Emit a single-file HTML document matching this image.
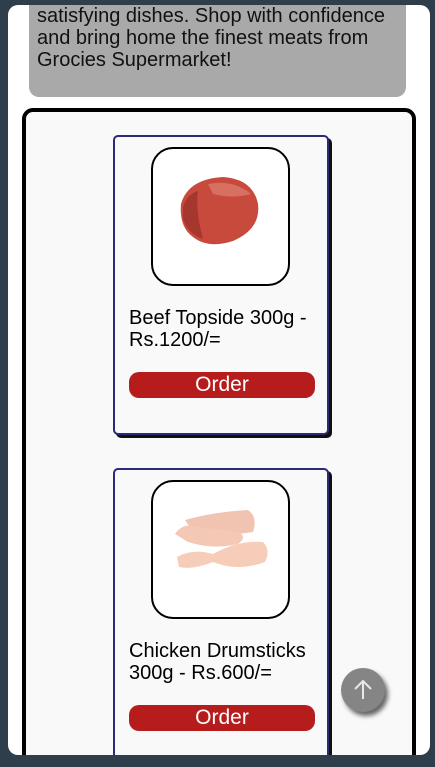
<!DOCTYPE html>
<html><head><meta charset="utf-8"><style>
*{box-sizing:border-box;margin:0;padding:0}
html,body{width:435px;height:767px;overflow:hidden;background:#2f3e4b;font-family:"Liberation Sans",Arial,sans-serif}
.panel{position:absolute;left:8px;top:5px;width:422px;height:750px;background:#fff;border-radius:10px;overflow:hidden}
.grey{position:absolute;left:21px;top:-40px;width:377px;height:132px;background:#aaa9a9;border-radius:10px;padding:0 8px}
.grey p{position:absolute;left:8px;top:40px;font-size:20px;line-height:22px;color:#111;width:370px}
.box{position:absolute;left:14px;top:103px;width:394px;height:660px;border:4px solid #000;border-radius:11px;background:#f9f9f9}
.card{position:absolute;left:87px;width:216px;height:300px;border:2px solid #2b2a7a;border-radius:5px;background:#f9f9f9;box-shadow:3px 3px 0 #111}
.img{position:absolute;left:36px;top:10px;width:139px;height:139px;border:2.5px solid #000;border-radius:22px;background:#fff;overflow:hidden}
.t{position:absolute;left:14px;top:170px;font-size:20px;line-height:22px;color:#000;width:195px}
.btn{position:absolute;left:14px;top:235px;width:186px;height:26px;background:#b71c1c;border-radius:10px;color:#fff;font-size:21px;text-align:center;line-height:25px}
.up{position:absolute;left:341px;top:668px;width:44px;height:44px;border-radius:50%;background:#858585;box-shadow:3px 4px 5px rgba(0,0,0,.6)}
</style></head><body>
<div class="panel">
<div class="grey"><p>satisfying dishes. Shop with confidence and bring home the finest meats from Grocies Supermarket!</p></div>
<div class="box">
<div class="card" style="top:23px">
<div class="img"><svg width="139" height="139" viewBox="0 0 139 139">
<path d="M28 55 Q35 30 70 28 Q100 30 105 55 Q108 80 80 92 Q55 100 40 88 Q26 78 28 55Z" fill="#c84a3c"/>
<path d="M30 58 Q34 45 45 42 Q42 60 50 90 Q35 85 30 70Z" fill="#a6372e"/>
<path d="M55 35 Q80 30 98 45 Q80 50 60 45Z" fill="#dd8070" opacity=".7"/>
</svg></div>
<div class="t">Beef Topside 300g - Rs.1200/=</div>
<div class="btn">Order</div>
</div>
<div class="card" style="top:356px">
<div class="img"><svg width="139" height="139" viewBox="0 0 139 139">
<path d="M32 38 Q60 30 95 28 Q105 35 100 50 Q70 55 40 50Z" fill="#f0c4b0"/>
<path d="M22 52 Q30 40 45 45 L85 50 Q95 55 85 62 Q60 68 35 60Z" fill="#f3c9b6"/>
<path d="M24 75 Q40 66 60 72 Q85 58 110 60 Q118 68 112 80 Q85 90 60 80 Q40 88 26 85Z" fill="#f5cdb9"/>
</svg></div>
<div class="t">Chicken Drumsticks 300g - Rs.600/=</div>
<div class="btn">Order</div>
</div>
</div>
</div>
<div class="up"><svg width="44" height="44" viewBox="0 0 44 44"><path d="M22 31V13M14 21L22 13L30 21" stroke="#e8e8e8" stroke-width="2" fill="none"/></svg></div>
</body></html>
